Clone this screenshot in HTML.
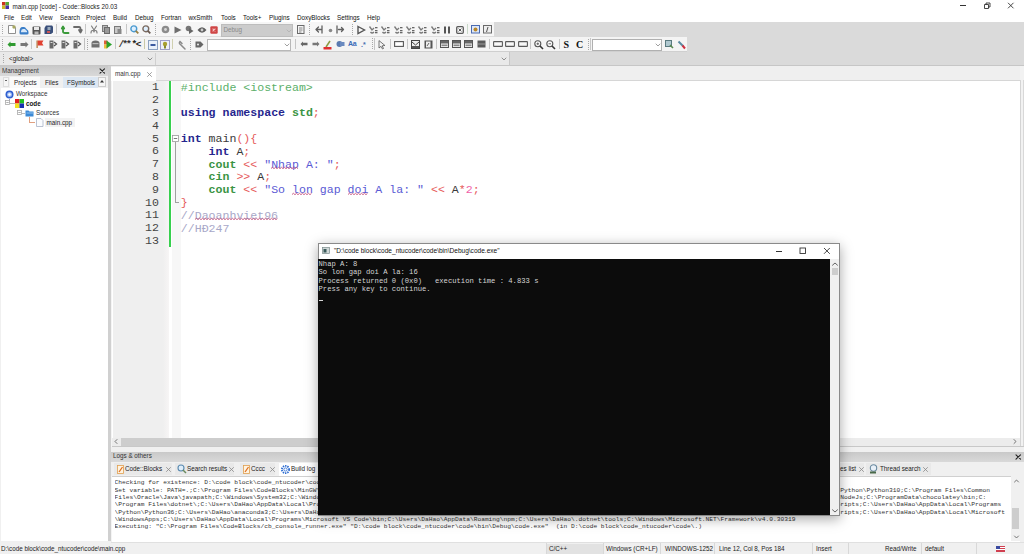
<!DOCTYPE html>
<html><head><meta charset="utf-8">
<style>
html,body{margin:0;padding:0}
body{width:1024px;height:554px;overflow:hidden;position:relative;background:#f0f0f0;font-family:"Liberation Sans",sans-serif;font-size:6.3px;color:#000}
.a{position:absolute}
.t{position:absolute;white-space:pre}
svg{overflow:visible}
</style></head><body>
<div class="a" style="left:0px;top:0px;width:1024px;height:22px;background:#fff;"></div>
<svg class="a" style="left:2px;top:2px;" width="7" height="7" viewBox="0 0 7 7"><rect x="0" y="0" width="3.5" height="3.5" fill="#cc3322"/><rect x="3.5" y="0" width="3.5" height="3.5" fill="#55aa33"/><rect x="0" y="3.5" width="3.5" height="3.5" fill="#c9b92a"/><rect x="3.5" y="3.5" width="3.5" height="3.5" fill="#4433aa"/></svg>
<div class="t" style="left:12.5px;top:1.7999999999999998px;height:10px;line-height:10px;font-family:'Liberation Sans';font-size:6.3px;color:#222;font-weight:400;">main.cpp [code] - Code::Blocks 20.03</div>
<div class="a" style="left:960px;top:5px;width:5.5px;height:0.9px;background:#333;"></div>
<svg class="a" style="left:982px;top:2px;" width="9" height="7" viewBox="0 0 9 7"><path d="M2.5 2.5h4v4h-4z M4 2.5V1h4v4H6.5" fill="none" stroke="#333" stroke-width="0.9"/></svg>
<svg class="a" style="left:1007px;top:2px;" width="8" height="7" viewBox="0 0 8 7"><path d="M1 0.8L6.5 6.3M6.5 0.8L1 6.3" stroke="#333" stroke-width="0.9"/></svg>
<div class="t" style="left:4px;top:12.5px;height:10px;line-height:10px;font-family:'Liberation Sans';font-size:6.3px;color:#111;font-weight:400;">File</div>
<div class="t" style="left:21px;top:12.5px;height:10px;line-height:10px;font-family:'Liberation Sans';font-size:6.3px;color:#111;font-weight:400;">Edit</div>
<div class="t" style="left:39px;top:12.5px;height:10px;line-height:10px;font-family:'Liberation Sans';font-size:6.3px;color:#111;font-weight:400;">View</div>
<div class="t" style="left:60px;top:12.5px;height:10px;line-height:10px;font-family:'Liberation Sans';font-size:6.3px;color:#111;font-weight:400;">Search</div>
<div class="t" style="left:86px;top:12.5px;height:10px;line-height:10px;font-family:'Liberation Sans';font-size:6.3px;color:#111;font-weight:400;">Project</div>
<div class="t" style="left:113px;top:12.5px;height:10px;line-height:10px;font-family:'Liberation Sans';font-size:6.3px;color:#111;font-weight:400;">Build</div>
<div class="t" style="left:135px;top:12.5px;height:10px;line-height:10px;font-family:'Liberation Sans';font-size:6.3px;color:#111;font-weight:400;">Debug</div>
<div class="t" style="left:161px;top:12.5px;height:10px;line-height:10px;font-family:'Liberation Sans';font-size:6.3px;color:#111;font-weight:400;">Fortran</div>
<div class="t" style="left:188.5px;top:12.5px;height:10px;line-height:10px;font-family:'Liberation Sans';font-size:6.3px;color:#111;font-weight:400;">wxSmith</div>
<div class="t" style="left:221px;top:12.5px;height:10px;line-height:10px;font-family:'Liberation Sans';font-size:6.3px;color:#111;font-weight:400;">Tools</div>
<div class="t" style="left:243px;top:12.5px;height:10px;line-height:10px;font-family:'Liberation Sans';font-size:6.3px;color:#111;font-weight:400;">Tools+</div>
<div class="t" style="left:269px;top:12.5px;height:10px;line-height:10px;font-family:'Liberation Sans';font-size:6.3px;color:#111;font-weight:400;">Plugins</div>
<div class="t" style="left:297px;top:12.5px;height:10px;line-height:10px;font-family:'Liberation Sans';font-size:6.3px;color:#111;font-weight:400;">DoxyBlocks</div>
<div class="t" style="left:337px;top:12.5px;height:10px;line-height:10px;font-family:'Liberation Sans';font-size:6.3px;color:#111;font-weight:400;">Settings</div>
<div class="t" style="left:367px;top:12.5px;height:10px;line-height:10px;font-family:'Liberation Sans';font-size:6.3px;color:#111;font-weight:400;">Help</div>
<div class="a" style="left:0px;top:22px;width:1024px;height:44px;background:#dadada;"></div>
<div class="a" style="left:0px;top:22px;width:494px;height:14px;background:#f6f6f6;"></div>
<div class="a" style="left:0px;top:36px;width:494px;height:0.6px;background:#dedede;"></div>
<div class="a" style="left:0px;top:37px;width:687px;height:13.5px;background:#f4f4f4;"></div>
<div class="a" style="left:0px;top:50.5px;width:687px;height:1px;background:#cfcfcf;"></div>
<div class="a" style="left:0px;top:52px;width:510px;height:13.5px;background:#e9e9e9;"></div>
<div class="a" style="left:0px;top:65.2px;width:1024px;height:0.9px;background:#c6c6c6;"></div>
<div class="a" style="left:0px;top:65.5px;width:510px;height:0.8px;background:#c8c8c8;"></div>
<svg class="a" style="left:2px;top:24.5px;" width="1" height="11" viewBox="0 0 1 11"><rect x="0" y="0" width="1" height="1" fill="#a8a8a8"/><rect x="0" y="2" width="1" height="1" fill="#a8a8a8"/><rect x="0" y="4" width="1" height="1" fill="#a8a8a8"/><rect x="0" y="6" width="1" height="1" fill="#a8a8a8"/><rect x="0" y="8" width="1" height="1" fill="#a8a8a8"/></svg>
<svg class="a" style="left:8px;top:25px;" width="8" height="9" viewBox="0 0 8 9"><path d="M0.5 0.5h5l2 2v6h-7z" fill="#fff" stroke="#909090" stroke-width="1"/></svg>
<svg class="a" style="left:12px;top:24.5px;" width="4" height="4" viewBox="0 0 4 4"><circle cx="2" cy="2" r="1.7" fill="#a8a860"/></svg>
<svg class="a" style="left:19px;top:25.5px;" width="10" height="9" viewBox="0 0 10 9"><path d="M0.5 6 Q0.5 1 3.5 1 L5 1 Q6.5 1 7 2.5 L8 3.5 Q9.5 4 9.5 6 L9.5 7.5 Q9.5 8.5 8 8.5 L2 8.5 Q0.5 8.5 0.5 7Z" fill="#3a7ec8"/><path d="M2 5.5 Q2 3 4 3 L6 3 Q7 4.5 8 5 L8 6.3 L2 6.3Z" fill="#d8e8f8"/></svg>
<svg class="a" style="left:32px;top:25.5px;" width="9" height="9" viewBox="0 0 9 9"><rect x="0.5" y="0.5" width="8" height="8" rx="1" fill="#555"/><rect x="2" y="1" width="5" height="3" fill="#e8e8e8"/><rect x="2.5" y="5.5" width="4" height="3" fill="#bbb"/></svg>
<svg class="a" style="left:43.5px;top:25px;" width="9" height="9" viewBox="0 0 9 9"><path d="M2 0.5h6l1 1v6l-2 1.5h-6.5v-6z" fill="#3a4f7a"/><rect x="3.5" y="2" width="3" height="3" fill="#9ab"/><rect x="3" y="6" width="3" height="2" fill="#c55"/></svg>
<div class="a" style="left:55.5px;top:24px;width:1px;height:10px;background:#c6c6c6;"></div>
<svg class="a" style="left:61px;top:25px;" width="9" height="9" viewBox="0 0 9 9"><path d="M2 4.5 L2 6.5 Q2 8 4 8 L7.5 8 M0.8 3.5 L2 1.5 L3.2 3.5" fill="none" stroke="#3a9a3a" stroke-width="1.8" stroke-linejoin="round" stroke-linecap="round"/></svg>
<svg class="a" style="left:73px;top:25px;" width="9" height="9" viewBox="0 0 9 9"><path d="M1 2 L6 2 Q7.5 2 7.5 4 L7.5 6 M6 5 L7.5 7.5 L8.8 5" fill="none" stroke="#6a6a6a" stroke-width="1.8" stroke-linejoin="round" stroke-linecap="round"/></svg>
<div class="a" style="left:85px;top:24px;width:1px;height:10px;background:#c6c6c6;"></div>
<svg class="a" style="left:90px;top:25px;" width="8" height="9" viewBox="0 0 8 9"><path d="M1.5 1 L4 5 L6.5 1 M1 8 Q1 5.5 2.5 5.5 Q4 5.5 4 7 M7 8 Q7 5.5 5.5 5.5 Q4 5.5 4 7" fill="none" stroke="#7a7a7a" stroke-width="1.1" stroke-linejoin="round" stroke-linecap="round"/></svg>
<svg class="a" style="left:102px;top:25px;" width="8" height="9" viewBox="0 0 8 9"><rect x="0.5" y="0.5" width="5" height="6" fill="#bbb" stroke="#7a7a7a"/><rect x="2.5" y="2.5" width="5" height="6" fill="#999" stroke="#6a6a6a"/></svg>
<svg class="a" style="left:114px;top:25px;" width="8" height="9" viewBox="0 0 8 9"><rect x="0.5" y="1.5" width="6" height="7" fill="#c8c8c8" stroke="#7a7a7a"/><rect x="3.5" y="4" width="4" height="5" fill="#888"/></svg>
<div class="a" style="left:125.5px;top:24px;width:1px;height:10px;background:#c6c6c6;"></div>
<svg class="a" style="left:130px;top:25px;" width="9" height="9" viewBox="0 0 9 9"><circle cx="3.8" cy="3.8" r="2.9" fill="#dff0ff" stroke="#4a9ad0" stroke-width="1.4"/><path d="M5.8 5.8L8.3 8.3" stroke="#9a8040" stroke-width="1.8"/></svg>
<svg class="a" style="left:142px;top:25px;" width="9" height="9" viewBox="0 0 9 9"><circle cx="3.8" cy="3.8" r="2.9" fill="#dff0ff" stroke="#7a6a60" stroke-width="1.4"/><path d="M5.8 5.8L8.3 8.3" stroke="#6a5a50" stroke-width="1.8"/></svg>
<svg class="a" style="left:155px;top:24px;" width="1" height="12" viewBox="0 0 1 12"><rect x="0" y="0" width="1" height="1" fill="#a8a8a8"/><rect x="0" y="2" width="1" height="1" fill="#a8a8a8"/><rect x="0" y="4" width="1" height="1" fill="#a8a8a8"/><rect x="0" y="6" width="1" height="1" fill="#a8a8a8"/><rect x="0" y="8" width="1" height="1" fill="#a8a8a8"/><rect x="0" y="10" width="1" height="1" fill="#a8a8a8"/></svg>
<svg class="a" style="left:160.5px;top:25px;" width="9" height="9" viewBox="0 0 9 9"><circle cx="4.5" cy="4.5" r="3.8" fill="#8c8c8c"/><circle cx="4.5" cy="4.5" r="1.4" fill="#d8d8d8"/></svg>
<svg class="a" style="left:173.5px;top:25.5px;" width="8" height="8" viewBox="0 0 8 8"><path d="M0.5 0.5 L7.5 4 L0.5 7.5 Z" fill="#6e6e6e"/></svg>
<svg class="a" style="left:185px;top:25px;" width="9" height="9" viewBox="0 0 9 9"><circle cx="3.5" cy="3.5" r="2.8" fill="#777"/><path d="M4 3 L8.5 6 L4 9Z" fill="#666"/></svg>
<svg class="a" style="left:196.5px;top:25.5px;" width="10" height="8" viewBox="0 0 10 8"><path d="M0.5 4 Q5 -1.5 9.5 4 Q5 9.5 0.5 4Z" fill="#5e5e5e"/><circle cx="5" cy="4" r="1.4" fill="#cfcfcf"/></svg>
<svg class="a" style="left:210px;top:25.5px;" width="8" height="8" viewBox="0 0 8 8"><rect x="0.3" y="0.3" width="7.4" height="7.4" rx="1.2" fill="#cf4545"/><path d="M2.6 2.6L5.4 5.4M5.4 2.6L2.6 5.4" stroke="#f4c8c8" stroke-width="1.1"/></svg>
<div class="a" style="left:221px;top:24px;width:72px;height:12.5px;background:#cccccc;border:0.5px solid #bdbdbd;box-sizing:border-box"></div>
<div class="t" style="left:223.5px;top:25.2px;height:10px;line-height:10px;font-family:'Liberation Sans';font-size:6.3px;color:#8a8a8a;font-weight:400;">Debug</div>
<svg class="a" style="left:286px;top:28.5px;" width="6" height="4" viewBox="0 0 6 4"><path d="M1 1 L3 3 L5 1" fill="none" stroke="#b0b0b0" stroke-width="0.8" stroke-linejoin="round" stroke-linecap="round"/></svg>
<svg class="a" style="left:297px;top:25px;" width="8" height="9" viewBox="0 0 8 9"><rect x="0.5" y="0.5" width="6.5" height="8" fill="#f4f4f4" stroke="#6a6a6a"/><path d="M2 3h3.5M2 5h3.5M2 7h2.5" stroke="#6a6a6a" stroke-width="0.8"/></svg>
<svg class="a" style="left:309px;top:24px;" width="1" height="12" viewBox="0 0 1 12"><rect x="0" y="0" width="1" height="1" fill="#a8a8a8"/><rect x="0" y="2" width="1" height="1" fill="#a8a8a8"/><rect x="0" y="4" width="1" height="1" fill="#a8a8a8"/><rect x="0" y="6" width="1" height="1" fill="#a8a8a8"/><rect x="0" y="8" width="1" height="1" fill="#a8a8a8"/><rect x="0" y="10" width="1" height="1" fill="#a8a8a8"/></svg>
<svg class="a" style="left:315px;top:25px;" width="8" height="9" viewBox="0 0 8 9"><path d="M7 1 L7 8 M1 4.5 L6 4.5 M3.5 2 L1 4.5 L3.5 7" fill="none" stroke="#606060" stroke-width="1.3" stroke-linejoin="round" stroke-linecap="round"/></svg>
<svg class="a" style="left:327.5px;top:27.5px;" width="5" height="5" viewBox="0 0 5 5"><circle cx="2.5" cy="2.5" r="1.8" fill="#888"/></svg>
<svg class="a" style="left:336px;top:25px;" width="9" height="9" viewBox="0 0 9 9"><path d="M1 1 L1 8 M2.5 4.5 L7.5 4.5 M5.5 2.5 L7.5 4.5 L5.5 6.5" fill="none" stroke="#606060" stroke-width="1.3" stroke-linejoin="round" stroke-linecap="round"/></svg>
<svg class="a" style="left:352px;top:24px;" width="1" height="12" viewBox="0 0 1 12"><rect x="0" y="0" width="1" height="1" fill="#a8a8a8"/><rect x="0" y="2" width="1" height="1" fill="#a8a8a8"/><rect x="0" y="4" width="1" height="1" fill="#a8a8a8"/><rect x="0" y="6" width="1" height="1" fill="#a8a8a8"/><rect x="0" y="8" width="1" height="1" fill="#a8a8a8"/><rect x="0" y="10" width="1" height="1" fill="#a8a8a8"/></svg>
<svg class="a" style="left:357px;top:25.5px;" width="8" height="8" viewBox="0 0 8 8"><path d="M1 0.5 L7.5 4 L1 7.5 Z" fill="none" stroke="#555" stroke-width="1.4"/></svg>
<svg class="a" style="left:369px;top:25px;" width="9" height="9" viewBox="0 0 9 9"><path d="M0.5 1.5 L3 5 L5 3 M1.5 7 Q3 9 5 7" fill="none" stroke="#7a7a7a" stroke-width="1.3"/><rect x="6" y="2" width="2.5" height="1.3" fill="#666"/><rect x="6" y="5" width="2.5" height="1.3" fill="#666"/><rect x="6" y="7" width="2.5" height="1.3" fill="#666"/></svg>
<svg class="a" style="left:381px;top:25px;" width="9" height="9" viewBox="0 0 9 9"><path d="M0.5 1.5 L3 5 L5 3 M1.5 7 Q3 9 5 7" fill="none" stroke="#7a7a7a" stroke-width="1.3"/><rect x="6" y="2" width="2.5" height="1.3" fill="#666"/><rect x="6" y="5" width="2.5" height="1.3" fill="#666"/><rect x="6" y="7" width="2.5" height="1.3" fill="#666"/></svg>
<svg class="a" style="left:394px;top:25px;" width="9" height="9" viewBox="0 0 9 9"><path d="M0.5 1.5 L3 5 L5 3 M1.5 7 Q3 9 5 7" fill="none" stroke="#7a7a7a" stroke-width="1.3"/><rect x="6" y="2" width="2.5" height="1.3" fill="#666"/><rect x="6" y="5" width="2.5" height="1.3" fill="#666"/><rect x="6" y="7" width="2.5" height="1.3" fill="#666"/></svg>
<svg class="a" style="left:406px;top:25px;" width="9" height="9" viewBox="0 0 9 9"><path d="M0.5 1.5 L3 5 L5 3 M1.5 7 Q3 9 5 7" fill="none" stroke="#7a7a7a" stroke-width="1.3"/><rect x="6" y="2" width="2.5" height="1.3" fill="#666"/><rect x="6" y="5" width="2.5" height="1.3" fill="#666"/><rect x="6" y="7" width="2.5" height="1.3" fill="#666"/></svg>
<svg class="a" style="left:418px;top:25px;" width="9" height="9" viewBox="0 0 9 9"><path d="M0.5 1.5 L3 5 L5 3 M1.5 7 Q3 9 5 7" fill="none" stroke="#7a7a7a" stroke-width="1.3"/><rect x="6" y="2" width="2.5" height="1.3" fill="#666"/><rect x="6" y="5" width="2.5" height="1.3" fill="#666"/><rect x="6" y="7" width="2.5" height="1.3" fill="#666"/></svg>
<svg class="a" style="left:431px;top:25px;" width="9" height="9" viewBox="0 0 9 9"><path d="M0.5 1.5 L3 5 L5 3 M1.5 7 Q3 9 5 7" fill="none" stroke="#7a7a7a" stroke-width="1.3"/><rect x="6" y="2" width="2.5" height="1.3" fill="#666"/><rect x="6" y="5" width="2.5" height="1.3" fill="#666"/><rect x="6" y="7" width="2.5" height="1.3" fill="#666"/></svg>
<svg class="a" style="left:443px;top:25.5px;" width="8" height="8" viewBox="0 0 8 8"><rect x="1" y="0.5" width="2" height="7" fill="#555"/><rect x="5" y="0.5" width="2" height="7" fill="#555"/></svg>
<svg class="a" style="left:455.5px;top:25.5px;" width="8" height="8" viewBox="0 0 8 8"><rect x="0.7" y="0.7" width="6.6" height="6.6" rx="1" fill="none" stroke="#5a5a5a" stroke-width="1.3"/><path d="M2.6 2.6L5.4 5.4M5.4 2.6L2.6 5.4" stroke="#5a5a5a" stroke-width="1"/></svg>
<div class="a" style="left:467px;top:24px;width:1px;height:10px;background:#c8d8c8;"></div>
<svg class="a" style="left:471px;top:25px;" width="9" height="9" viewBox="0 0 9 9"><rect x="0.5" y="0.5" width="8" height="7.5" fill="#dde8f8" stroke="#4a6ab0"/><circle cx="4.5" cy="4.5" r="2" fill="#b8862a"/></svg>
<svg class="a" style="left:483px;top:25px;" width="9" height="9" viewBox="0 0 9 9"><rect x="0.5" y="0.5" width="8" height="7.5" fill="#eee" stroke="#6a6a6a"/><path d="M5 2 L3.5 7" stroke="#444" stroke-width="0.9"/></svg>
<svg class="a" style="left:2px;top:38.5px;" width="1" height="12" viewBox="0 0 1 12"><rect x="0" y="0" width="1" height="1" fill="#a8a8a8"/><rect x="0" y="2" width="1" height="1" fill="#a8a8a8"/><rect x="0" y="4" width="1" height="1" fill="#a8a8a8"/><rect x="0" y="6" width="1" height="1" fill="#a8a8a8"/><rect x="0" y="8" width="1" height="1" fill="#a8a8a8"/><rect x="0" y="10" width="1" height="1" fill="#a8a8a8"/></svg>
<svg class="a" style="left:7px;top:40.5px;" width="9" height="7" viewBox="0 0 9 7"><path d="M0.5 3.5 L3.5 0.5 L3.5 2 L8.5 2 L8.5 5 L3.5 5 L3.5 6.5 Z" fill="#2f9a30"/></svg>
<svg class="a" style="left:20px;top:40.5px;" width="9" height="7" viewBox="0 0 9 7"><path d="M8.5 3.5 L5.5 0.5 L5.5 2 L0.5 2 L0.5 5 L5.5 5 L5.5 6.5 Z" fill="#777"/></svg>
<div class="a" style="left:31px;top:39px;width:1px;height:10px;background:#c6c6c6;"></div>
<svg class="a" style="left:36px;top:40px;" width="8" height="8" viewBox="0 0 8 8"><rect x="0.5" y="0.5" width="1.2" height="7.5" fill="#b07030"/><path d="M1.7 0.5 L7.5 0.5 L6 3 L7.5 5.5 L1.7 5.5Z" fill="#e04030"/></svg>
<svg class="a" style="left:49px;top:40px;" width="8" height="9" viewBox="0 0 8 9"><path d="M0.5 0.5h4v8h-4z" fill="#6a6a6a"/><path d="M5 2 L7.5 4 L5 6" fill="none" stroke="#555" stroke-width="1.3"/><rect x="1.5" y="2" width="2" height="1" fill="#ddd"/></svg>
<svg class="a" style="left:61px;top:40px;" width="8" height="9" viewBox="0 0 8 9"><path d="M0.5 0.5h4v8h-4z" fill="#6a6a6a"/><path d="M5 2 L7.5 4 L5 6" fill="none" stroke="#555" stroke-width="1.3"/><rect x="1.5" y="2" width="2" height="1" fill="#ddd"/></svg>
<svg class="a" style="left:73px;top:40px;" width="8" height="9" viewBox="0 0 8 9"><path d="M0.5 0.5h4v8h-4z" fill="#6a6a6a"/><path d="M5 2 L7.5 4 L5 6" fill="none" stroke="#555" stroke-width="1.3"/><rect x="1.5" y="2" width="2" height="1" fill="#ddd"/></svg>
<div class="a" style="left:84px;top:38px;width:1px;height:12px;background:#c0c0c0;"></div>
<svg class="a" style="left:87px;top:38.5px;" width="1" height="12" viewBox="0 0 1 12"><rect x="0" y="0" width="1" height="1" fill="#a8a8a8"/><rect x="0" y="2" width="1" height="1" fill="#a8a8a8"/><rect x="0" y="4" width="1" height="1" fill="#a8a8a8"/><rect x="0" y="6" width="1" height="1" fill="#a8a8a8"/><rect x="0" y="8" width="1" height="1" fill="#a8a8a8"/><rect x="0" y="10" width="1" height="1" fill="#a8a8a8"/></svg>
<svg class="a" style="left:91px;top:40px;" width="9" height="8" viewBox="0 0 9 8"><path d="M0.5 3 Q0.5 0.5 4.5 0.5 Q8.5 0.5 8.5 3 L8.5 7.5 L0.5 7.5Z" fill="#6f6f6f"/><rect x="1.5" y="3" width="6" height="1.2" fill="#bbb"/></svg>
<svg class="a" style="left:104px;top:39.5px;" width="8" height="9" viewBox="0 0 8 9"><rect x="0" y="0.5" width="3.5" height="4" fill="#e0603a"/><rect x="0" y="4.5" width="3.5" height="4" fill="#f0c040"/><path d="M2.5 0.5 L8 4.5 L2.5 8.5Z" fill="#2aa02a"/></svg>
<div class="a" style="left:115px;top:39px;width:1px;height:10px;background:#c6c6c6;"></div>
<div class="t" style="left:118.5px;top:39.8px;height:10px;line-height:10px;font-family:'Liberation Mono';font-size:9.5px;color:#333;font-weight:700;letter-spacing:-2px">/**</div>
<div class="t" style="left:131.5px;top:39.8px;height:10px;line-height:10px;font-family:'Liberation Mono';font-size:9.5px;color:#222;font-weight:700;letter-spacing:-1.5px">*&lt;</div>
<div class="a" style="left:144px;top:39px;width:1px;height:10px;background:#c8c8a8;"></div>
<svg class="a" style="left:148px;top:39.5px;" width="10" height="10" viewBox="0 0 10 10"><rect x="0.5" y="0.5" width="9" height="9" fill="#e8f0fa" stroke="#8aa0c0"/><rect x="2.5" y="4" width="5" height="2" fill="#3a5aa0"/></svg>
<svg class="a" style="left:160px;top:39.5px;" width="10" height="10" viewBox="0 0 10 10"><rect x="0.5" y="0.5" width="9" height="9" fill="#eef0f8" stroke="#a0a0c8"/><circle cx="5" cy="4" r="2.2" fill="#a8a030"/><rect x="4" y="5.5" width="2" height="3" fill="#8a8a30"/></svg>
<div class="a" style="left:172px;top:39px;width:1px;height:10px;background:#d0d0b0;"></div>
<svg class="a" style="left:178px;top:39.5px;" width="9" height="10" viewBox="0 0 9 10"><path d="M2 1.5 Q0.5 3.5 2.5 4.5 L7 9 M2 1.5 L4 3.5" fill="none" stroke="#8a8a8a" stroke-width="1.5" stroke-linejoin="round" stroke-linecap="round"/></svg>
<svg class="a" style="left:190px;top:38.5px;" width="1" height="12" viewBox="0 0 1 12"><rect x="0" y="0" width="1" height="1" fill="#a8a8a8"/><rect x="0" y="2" width="1" height="1" fill="#a8a8a8"/><rect x="0" y="4" width="1" height="1" fill="#a8a8a8"/><rect x="0" y="6" width="1" height="1" fill="#a8a8a8"/><rect x="0" y="8" width="1" height="1" fill="#a8a8a8"/><rect x="0" y="10" width="1" height="1" fill="#a8a8a8"/></svg>
<svg class="a" style="left:195px;top:40.5px;" width="9" height="7" viewBox="0 0 9 7"><path d="M0.5 0.5 L5.5 0.5 L8.5 3.5 L5.5 6.5 L0.5 6.5 Z" fill="#666"/><circle cx="3" cy="3.5" r="1" fill="#eee"/></svg>
<div class="a" style="left:207px;top:38.5px;width:84px;height:12px;background:#fff;border:0.6px solid #b8b8b8;box-sizing:border-box"></div>
<svg class="a" style="left:283.5px;top:43px;" width="6" height="4" viewBox="0 0 6 4"><path d="M1 1 L3 3 L5 1" fill="none" stroke="#888" stroke-width="0.8" stroke-linejoin="round" stroke-linecap="round"/></svg>
<div class="a" style="left:295px;top:39px;width:1px;height:10px;background:#c6c6c6;"></div>
<svg class="a" style="left:300px;top:41px;" width="8" height="6" viewBox="0 0 8 6"><path d="M0.5 3 L3 0.5 L3 1.8 L7.5 1.8 L7.5 4.2 L3 4.2 L3 5.5Z" fill="#666"/></svg>
<svg class="a" style="left:312px;top:41px;" width="8" height="6" viewBox="0 0 8 6"><path d="M7.5 3 L5 0.5 L5 1.8 L0.5 1.8 L0.5 4.2 L5 4.2 L5 5.5Z" fill="#777"/></svg>
<svg class="a" style="left:323px;top:39.5px;" width="9" height="10" viewBox="0 0 9 10"><path d="M3 7 L7 1" stroke="#8a9a40" stroke-width="1.5"/><rect x="0.5" y="7" width="8" height="2.5" fill="#e03030"/></svg>
<svg class="a" style="left:336px;top:40px;" width="9" height="8" viewBox="0 0 9 8"><circle cx="3.5" cy="4" r="3" fill="#5a7ab0"/><rect x="4" y="2" width="4.5" height="4" fill="#6a8ac0"/></svg>
<div class="t" style="left:348px;top:39.3px;height:10px;line-height:10px;font-family:'Liberation Sans';font-size:7px;color:#3a6ab8;font-weight:700;letter-spacing:-0.4px">Aa</div>
<div class="t" style="left:361px;top:39.8px;height:10px;line-height:10px;font-family:'Liberation Sans';font-size:7px;color:#4a70b0;font-weight:700;">.*</div>
<svg class="a" style="left:372px;top:38px;" width="1" height="12" viewBox="0 0 1 12"><rect x="0" y="0" width="1" height="1" fill="#a8a8a8"/><rect x="0" y="2" width="1" height="1" fill="#a8a8a8"/><rect x="0" y="4" width="1" height="1" fill="#a8a8a8"/><rect x="0" y="6" width="1" height="1" fill="#a8a8a8"/><rect x="0" y="8" width="1" height="1" fill="#a8a8a8"/><rect x="0" y="10" width="1" height="1" fill="#a8a8a8"/></svg>
<div class="a" style="left:374px;top:38px;width:1px;height:12px;background:#c4c4c4;"></div>
<svg class="a" style="left:378px;top:39.5px;" width="7" height="10" viewBox="0 0 7 10"><path d="M1 1 L1 8 L3 6.3 L4.5 9 L5.5 8.5 L4.2 5.8 L6.5 5.5 Z" fill="none" stroke="#555" stroke-width="0.8" stroke-linejoin="round" stroke-linecap="round"/></svg>
<div class="a" style="left:390px;top:39px;width:1px;height:10px;background:#c6c6c6;"></div>
<svg class="a" style="left:394px;top:41px;" width="10" height="6" viewBox="0 0 10 6"><rect x="0.6" y="0.6" width="8.8" height="4.8" fill="#fff" stroke="#555" stroke-width="1.1"/></svg>
<div class="a" style="left:407px;top:39px;width:1px;height:10px;background:#c6c6c6;"></div>
<svg class="a" style="left:411px;top:39.5px;" width="9" height="9" viewBox="0 0 9 9"><rect x="0.5" y="0.5" width="8" height="8" fill="#eee" stroke="#444"/><path d="M1 2 L4.5 5 L8 2" stroke="#444" fill="none"/><rect x="1" y="6" width="7" height="2" fill="#555"/></svg>
<svg class="a" style="left:424px;top:39.5px;" width="9" height="9" viewBox="0 0 9 9"><rect x="0.5" y="0.5" width="8" height="8" fill="#555"/><rect x="2" y="1.5" width="4.5" height="6" fill="#eee"/><path d="M3 6 L5 3" stroke="#666"/></svg>
<div class="a" style="left:436px;top:39px;width:1px;height:10px;background:#c6c6c6;"></div>
<svg class="a" style="left:440px;top:40px;" width="9" height="8" viewBox="0 0 9 8"><rect x="0.5" y="0.5" width="8" height="7" fill="#eee" stroke="#555"/><rect x="1" y="1" width="7" height="2.5" fill="#666"/><rect x="1.5" y="4.5" width="6" height="1.6" fill="#888"/></svg>
<svg class="a" style="left:452px;top:40px;" width="9" height="8" viewBox="0 0 9 8"><rect x="0.5" y="0.5" width="8" height="7" fill="#eee" stroke="#555"/><rect x="1" y="1" width="7" height="2.5" fill="#666"/><rect x="1.5" y="4.5" width="6" height="1.6" fill="#888"/></svg>
<svg class="a" style="left:464px;top:40px;" width="9" height="8" viewBox="0 0 9 8"><rect x="0.5" y="0.5" width="8" height="7" fill="#eee" stroke="#555"/><rect x="1" y="1" width="7" height="2.5" fill="#666"/><rect x="1.5" y="4.5" width="6" height="1.6" fill="#888"/></svg>
<svg class="a" style="left:477px;top:40px;" width="9" height="8" viewBox="0 0 9 8"><rect x="0.5" y="0.5" width="8" height="7" fill="#5a5a5a"/><rect x="1" y="3.5" width="7" height="1" fill="#999"/></svg>
<div class="a" style="left:489px;top:39px;width:1px;height:10px;background:#c6c6c6;"></div>
<svg class="a" style="left:493px;top:41px;" width="10" height="6" viewBox="0 0 10 6"><rect x="0.6" y="0.6" width="8.8" height="4.8" rx="0.5" fill="#f8f8f8" stroke="#5a5a5a" stroke-width="1.1"/></svg>
<svg class="a" style="left:505px;top:41px;" width="10" height="6" viewBox="0 0 10 6"><rect x="0.6" y="0.6" width="8.8" height="4.8" rx="0.5" fill="#f8f8f8" stroke="#5a5a5a" stroke-width="1.1"/></svg>
<svg class="a" style="left:518px;top:41px;" width="10" height="6" viewBox="0 0 10 6"><rect x="0.6" y="0.6" width="8.8" height="4.8" rx="0.5" fill="#f8f8f8" stroke="#5a5a5a" stroke-width="1.1"/></svg>
<div class="a" style="left:530px;top:39px;width:1px;height:10px;background:#c6c6c6;"></div>
<svg class="a" style="left:534px;top:39.5px;" width="10" height="10" viewBox="0 0 10 10"><circle cx="3.8" cy="3.8" r="3" fill="#fff" stroke="#555" stroke-width="1.1"/><path d="M2.5 3.8h2.6M3.8 2.5v2.6" stroke="#555" stroke-width="0.9"/><path d="M6 6 L9 9" stroke="#333" stroke-width="1.6"/></svg>
<svg class="a" style="left:546px;top:39.5px;" width="10" height="10" viewBox="0 0 10 10"><circle cx="3.8" cy="3.8" r="3" fill="#fff" stroke="#555" stroke-width="1.1"/><path d="M2.5 3.8h2.6" stroke="#555" stroke-width="0.9"/><path d="M6 6 L9 9" stroke="#333" stroke-width="1.6"/></svg>
<div class="a" style="left:559px;top:39px;width:1px;height:10px;background:#c6c6c6;"></div>
<div class="t" style="left:563.5px;top:39.5px;height:10px;line-height:10px;font-family:'Liberation Serif';font-size:10px;color:#111;font-weight:700;">S</div>
<div class="t" style="left:576px;top:39.5px;height:10px;line-height:10px;font-family:'Liberation Serif';font-size:10px;color:#111;font-weight:700;">C</div>
<svg class="a" style="left:588px;top:38.5px;" width="1" height="12" viewBox="0 0 1 12"><rect x="0" y="0" width="1" height="1" fill="#a8a8a8"/><rect x="0" y="2" width="1" height="1" fill="#a8a8a8"/><rect x="0" y="4" width="1" height="1" fill="#a8a8a8"/><rect x="0" y="6" width="1" height="1" fill="#a8a8a8"/><rect x="0" y="8" width="1" height="1" fill="#a8a8a8"/><rect x="0" y="10" width="1" height="1" fill="#a8a8a8"/></svg>
<div class="a" style="left:590px;top:38px;width:1px;height:12px;background:#c8c8c8;"></div>
<div class="a" style="left:592px;top:38.5px;width:70px;height:12px;background:#fff;border:0.6px solid #b0b0b0;box-sizing:border-box"></div>
<svg class="a" style="left:654.5px;top:43px;" width="6" height="4" viewBox="0 0 6 4"><path d="M1 1 L3 3 L5 1" fill="none" stroke="#888" stroke-width="0.8" stroke-linejoin="round" stroke-linecap="round"/></svg>
<svg class="a" style="left:665px;top:40px;" width="9" height="9" viewBox="0 0 9 9"><rect x="0.5" y="0.5" width="6" height="6" fill="#b0c8d0" stroke="#5a7a80"/><path d="M5 5 L8 8" stroke="#5a8a50" stroke-width="1.6"/></svg>
<svg class="a" style="left:677px;top:39.5px;" width="9" height="10" viewBox="0 0 9 10"><path d="M1.5 1.5 L6 6" stroke="#5a8aa0" stroke-width="2"/><path d="M5.5 5.5 L8 8.5" stroke="#d03040" stroke-width="2"/></svg>
<svg class="a" style="left:2.5px;top:53.5px;" width="1" height="11" viewBox="0 0 1 11"><rect x="0" y="0" width="1" height="1" fill="#a8a8a8"/><rect x="0" y="2" width="1" height="1" fill="#a8a8a8"/><rect x="0" y="4" width="1" height="1" fill="#a8a8a8"/><rect x="0" y="6" width="1" height="1" fill="#a8a8a8"/><rect x="0" y="8" width="1" height="1" fill="#a8a8a8"/></svg>
<div class="t" style="left:9px;top:53.7px;height:10px;line-height:10px;font-family:'Liberation Sans';font-size:6.3px;color:#222;font-weight:400;">&lt;global&gt;</div>
<svg class="a" style="left:147px;top:57px;" width="6" height="4" viewBox="0 0 6 4"><path d="M1 1 L3 3 L5 1" fill="none" stroke="#777" stroke-width="0.8" stroke-linejoin="round" stroke-linecap="round"/></svg>
<div class="a" style="left:154.5px;top:53px;width:1px;height:12px;background:#d0d0d0;"></div>
<svg class="a" style="left:501px;top:57px;" width="6" height="4" viewBox="0 0 6 4"><path d="M1 1 L3 3 L5 1" fill="none" stroke="#777" stroke-width="0.8" stroke-linejoin="round" stroke-linecap="round"/></svg>
<div class="a" style="left:508.5px;top:52px;width:1px;height:14px;background:#c8c8c8;"></div>
<div class="a" style="left:0px;top:66px;width:108px;height:10px;background:linear-gradient(#c9c9c9,#d9d9d9);"></div>
<div class="t" style="left:2px;top:65.8px;height:10px;line-height:10px;font-family:'Liberation Sans';font-size:6.3px;color:#3a3a3a;font-weight:400;">Management</div>
<svg class="a" style="left:99px;top:68px;" width="7" height="6" viewBox="0 0 7 6"><path d="M1 0.8 L5.5 5.2 M5.5 0.8 L1 5.2" fill="none" stroke="#222" stroke-width="1.1" stroke-linejoin="round" stroke-linecap="round"/></svg>
<div class="a" style="left:0px;top:76px;width:108px;height:12px;background:#f0f0f0;"></div>
<div class="a" style="left:2.5px;top:77px;width:6.5px;height:10px;background:#f6f6f6;border:0.5px solid #ddd;box-sizing:border-box"></div>
<div class="a" style="left:5px;top:79.5px;width:1.5px;height:1.5px;background:#666;"></div>
<div class="a" style="left:10px;top:76.5px;width:30px;height:12px;background:#fafafa;"></div>
<div class="t" style="left:14px;top:77.8px;height:10px;line-height:10px;font-family:'Liberation Sans';font-size:6.3px;color:#222;font-weight:400;">Projects</div>
<div class="t" style="left:45px;top:78.0px;height:10px;line-height:10px;font-family:'Liberation Sans';font-size:6.3px;color:#222;font-weight:400;">Files</div>
<div class="a" style="left:63px;top:77px;width:34.5px;height:11px;background:#dce7f3;"></div>
<div class="t" style="left:67px;top:78.0px;height:10px;line-height:10px;font-family:'Liberation Sans';font-size:6.3px;color:#222;font-weight:400;">FSymbols</div>
<div class="a" style="left:98px;top:77px;width:7.5px;height:10px;background:#f6f6f6;border:0.5px solid #ccc;box-sizing:border-box"></div>
<svg class="a" style="left:100px;top:80px;" width="4" height="3" viewBox="0 0 4 3"><path d="M0 2.5 L2 0 L4 2.5Z" fill="#333"/></svg>
<div class="a" style="left:1px;top:88px;width:106.5px;height:453px;background:#fff;"></div>
<svg class="a" style="left:4.5px;top:89.5px;" width="9" height="9" viewBox="0 0 9 9"><circle cx="4.5" cy="4.5" r="4" fill="#2f5fd0"/><circle cx="4.5" cy="4.5" r="2.5" fill="#9ab8f0"/><circle cx="4.5" cy="4.5" r="1.3" fill="#fff"/></svg>
<div class="t" style="left:16px;top:88.5px;height:10px;line-height:10px;font-family:'Liberation Sans';font-size:6.3px;color:#333;font-weight:400;">Workspace</div>
<div class="a" style="left:9px;top:98.5px;width:0.8px;height:4px;background:#a0a0c0;"></div>
<svg class="a" style="left:4.5px;top:100px;" width="5" height="5" viewBox="0 0 5 5"><rect x="0.5" y="0.5" width="4" height="4" fill="#fff" stroke="#aaa" stroke-width="0.8"/><path d="M1.3 2.5h2.4" stroke="#777" stroke-width="0.6"/></svg>
<div class="a" style="left:9.5px;top:102.5px;width:5px;height:0.6px;background:#bbb;"></div>
<svg class="a" style="left:14.5px;top:98.5px;" width="9" height="9" viewBox="0 0 9 9"><rect x="0" y="0" width="4.5" height="4.5" fill="#e02020"/><rect x="4.5" y="0" width="4.5" height="4.5" fill="#20c020"/><rect x="0" y="4.5" width="4.5" height="4.5" fill="#f0e020"/><rect x="4.5" y="4.5" width="4.5" height="4.5" fill="#1830b0"/></svg>
<div class="t" style="left:26px;top:98.5px;height:10px;line-height:10px;font-family:'Liberation Sans';font-size:6.3px;color:#111;font-weight:700;">code</div>
<svg class="a" style="left:17px;top:110px;" width="5" height="5" viewBox="0 0 5 5"><rect x="0.5" y="0.5" width="4" height="4" fill="#fff" stroke="#aaa" stroke-width="0.8"/><path d="M1.3 2.5h2.4" stroke="#777" stroke-width="0.6"/></svg>
<div class="a" style="left:22px;top:112.5px;width:3px;height:0.6px;background:#bbb;"></div>
<svg class="a" style="left:25px;top:108.5px;" width="9" height="8" viewBox="0 0 9 8"><path d="M0.5 1.5 L3.5 1.5 L4.5 2.5 L8.5 2.5 L8.5 7.5 L0.5 7.5Z" fill="#3d8ad6"/><rect x="1.5" y="3.5" width="7" height="1" fill="#8ec0ee"/></svg>
<div class="t" style="left:36px;top:108.2px;height:10px;line-height:10px;font-family:'Liberation Sans';font-size:6.3px;color:#333;font-weight:400;">Sources</div>
<div class="a" style="left:29px;top:116.5px;width:0.7px;height:5.5px;background:#e0a080;"></div>
<div class="a" style="left:29px;top:122px;width:5.5px;height:0.7px;background:#e0a080;"></div>
<svg class="a" style="left:36px;top:117.5px;" width="8" height="9" viewBox="0 0 8 9"><path d="M0.5 0.5h4.5l2 2v6h-6.5z" fill="#fafcff" stroke="#a8b4c8" stroke-width="0.8"/></svg>
<div class="a" style="left:45px;top:118px;width:30px;height:9px;background:#f2f2f2;"></div>
<div class="t" style="left:46.5px;top:117.5px;height:10px;line-height:10px;font-family:'Liberation Sans';font-size:6.3px;color:#222;font-weight:400;">main.cpp</div>
<div class="a" style="left:107.5px;top:66px;width:3px;height:475px;background:#d0d0d0;"></div>
<div class="a" style="left:110.5px;top:66px;width:1px;height:475px;background:#f4f4f4;"></div>
<div class="a" style="left:111px;top:66px;width:913px;height:14px;background:#efefef;"></div>
<div class="a" style="left:111px;top:67px;width:44.5px;height:13.5px;background:#fff;"></div>
<div class="t" style="left:115px;top:69.2px;height:10px;line-height:10px;font-family:'Liberation Sans';font-size:6.3px;color:#333;font-weight:400;">main.cpp</div>
<svg class="a" style="left:147px;top:71.5px;" width="5" height="5" viewBox="0 0 5 5"><path d="M0.5 0.5 L4.5 4.5 M4.5 0.5 L0.5 4.5" fill="none" stroke="#888" stroke-width="0.8" stroke-linejoin="round" stroke-linecap="round"/></svg>
<div class="a" style="left:1019.5px;top:66px;width:4.5px;height:382px;background:#f2f2f2;"></div>
<div class="a" style="left:1019.6px;top:80px;width:0.8px;height:367px;background:#d4d4d4;"></div>
<div class="a" style="left:1023px;top:80px;width:1px;height:367px;background:#d8d8d8;"></div>
<div class="a" style="left:112px;top:80.5px;width:908px;height:357px;background:#fff;"></div>
<div class="a" style="left:155.5px;top:80px;width:865px;height:0.8px;background:#d6d6d6;"></div>
<div class="a" style="left:113px;top:80.5px;width:50px;height:357px;background:#efefef;"></div>
<div class="a" style="left:163px;top:80.5px;width:6px;height:357px;background:linear-gradient(to right,#efefef,#f7f5f5);"></div>
<div class="a" style="left:171.5px;top:80.5px;width:9px;height:357px;background:#f7f7f7;"></div>
<div class="a" style="left:168.9px;top:81px;width:2.6px;height:166px;background:#37d04e;"></div>
<div class="t" style="left:120px;width:39px;text-align:right;top:80.39px;height:13px;line-height:13px;font-family:'Liberation Mono';font-size:11.58px;color:#444">1</div>
<div class="t" style="left:120px;width:39px;text-align:right;top:93.19px;height:13px;line-height:13px;font-family:'Liberation Mono';font-size:11.58px;color:#444">2</div>
<div class="t" style="left:120px;width:39px;text-align:right;top:105.97px;height:13px;line-height:13px;font-family:'Liberation Mono';font-size:11.58px;color:#444">3</div>
<div class="t" style="left:120px;width:39px;text-align:right;top:118.77px;height:13px;line-height:13px;font-family:'Liberation Mono';font-size:11.58px;color:#444">4</div>
<div class="t" style="left:120px;width:39px;text-align:right;top:131.56px;height:13px;line-height:13px;font-family:'Liberation Mono';font-size:11.58px;color:#444">5</div>
<div class="t" style="left:120px;width:39px;text-align:right;top:144.34px;height:13px;line-height:13px;font-family:'Liberation Mono';font-size:11.58px;color:#444">6</div>
<div class="t" style="left:120px;width:39px;text-align:right;top:157.13px;height:13px;line-height:13px;font-family:'Liberation Mono';font-size:11.58px;color:#444">7</div>
<div class="t" style="left:120px;width:39px;text-align:right;top:169.93px;height:13px;line-height:13px;font-family:'Liberation Mono';font-size:11.58px;color:#444">8</div>
<div class="t" style="left:120px;width:39px;text-align:right;top:182.71px;height:13px;line-height:13px;font-family:'Liberation Mono';font-size:11.58px;color:#444">9</div>
<div class="t" style="left:120px;width:39px;text-align:right;top:195.50px;height:13px;line-height:13px;font-family:'Liberation Mono';font-size:11.58px;color:#444">10</div>
<div class="t" style="left:120px;width:39px;text-align:right;top:208.29px;height:13px;line-height:13px;font-family:'Liberation Mono';font-size:11.58px;color:#444">11</div>
<div class="t" style="left:120px;width:39px;text-align:right;top:221.08px;height:13px;line-height:13px;font-family:'Liberation Mono';font-size:11.58px;color:#444">12</div>
<div class="t" style="left:120px;width:39px;text-align:right;top:233.88px;height:13px;line-height:13px;font-family:'Liberation Mono';font-size:11.58px;color:#444">13</div>
<div class="t" style="left:180.8px;top:80.89px;height:13px;line-height:13px;font-family:'Liberation Mono';font-size:11.58px;color:#000"><span style="color:#5cb06a">#include &lt;iostream&gt;</span></div>
<div class="t" style="left:180.8px;top:106.47px;height:13px;line-height:13px;font-family:'Liberation Mono';font-size:11.58px;color:#000"><span style="color:#26268e;font-weight:700">using</span> <span style="color:#26268e;font-weight:700">namespace</span> <span style="color:#3a9444;font-weight:700">std</span><span style="color:#e65a5a">;</span></div>
<div class="t" style="left:180.8px;top:132.06px;height:13px;line-height:13px;font-family:'Liberation Mono';font-size:11.58px;color:#000"><span style="color:#26268e;font-weight:700">int</span> <span style="color:#3a3a3a">main</span><span style="color:#e65a5a">(){</span></div>
<div class="t" style="left:180.8px;top:144.84px;height:13px;line-height:13px;font-family:'Liberation Mono';font-size:11.58px;color:#000">    <span style="color:#26268e;font-weight:700">int</span> <span style="color:#3a3a3a">A</span><span style="color:#e65a5a">;</span></div>
<div class="t" style="left:180.8px;top:157.63px;height:13px;line-height:13px;font-family:'Liberation Mono';font-size:11.58px;color:#000">    <span style="color:#3a9444;font-weight:700">cout</span> <span style="color:#e65a5a">&lt;&lt;</span> <span style="color:#5a5ad4">&quot;Nhap A: &quot;</span><span style="color:#e65a5a">;</span></div>
<div class="t" style="left:180.8px;top:170.43px;height:13px;line-height:13px;font-family:'Liberation Mono';font-size:11.58px;color:#000">    <span style="color:#3a9444;font-weight:700">cin</span> <span style="color:#e65a5a">&gt;&gt;</span> <span style="color:#3a3a3a">A</span><span style="color:#e65a5a">;</span></div>
<div class="t" style="left:180.8px;top:183.21px;height:13px;line-height:13px;font-family:'Liberation Mono';font-size:11.58px;color:#000">    <span style="color:#3a9444;font-weight:700">cout</span> <span style="color:#e65a5a">&lt;&lt;</span> <span style="color:#5a5ad4">&quot;So lon gap doi A la: &quot;</span> <span style="color:#e65a5a">&lt;&lt;</span> <span style="color:#3a3a3a">A</span><span style="color:#e65a5a">*</span><span style="color:#f060a8">2</span><span style="color:#e65a5a">;</span></div>
<div class="t" style="left:180.8px;top:196.00px;height:13px;line-height:13px;font-family:'Liberation Mono';font-size:11.58px;color:#000"><span style="color:#e65a5a">}</span></div>
<div class="t" style="left:180.8px;top:208.79px;height:13px;line-height:13px;font-family:'Liberation Mono';font-size:11.58px;color:#000"><span style="color:#a8a8c8">//Daoanhviet96</span></div>
<div class="t" style="left:180.8px;top:221.58px;height:13px;line-height:13px;font-family:'Liberation Mono';font-size:11.58px;color:#000"><span style="color:#a8a8c8">//HĐ247</span></div>
<svg class="a" style="left:172px;top:134.555px;" width="7" height="7" viewBox="0 0 7 7"><rect x="0.5" y="0.5" width="6" height="6" fill="#fff" stroke="#999" stroke-width="0.8"/><path d="M1.8 3.5h3.4" stroke="#555" stroke-width="0.8"/></svg>
<div class="a" style="left:175.2px;top:141.555px;width:0.8px;height:60.44999999999999px;background:#a0a0a0;"></div>
<div class="a" style="left:175.2px;top:202.005px;width:3.5px;height:0.8px;background:#a0a0a0;"></div>
<svg class="a" style="left:271.15000000000003px;top:167.035px;" width="27.8" height="2.5" viewBox="0 0 27.8 2.5"><path d="M0 1.5 L1.50 0.3 L3.00 1.7 L4.50 0.3 L6.00 1.7 L7.50 0.3 L9.00 1.7 L10.50 0.3 L12.00 1.7 L13.50 0.3 L15.00 1.7 L16.50 0.3 L18.00 1.7 L19.50 0.3 L21.00 1.7 L22.50 0.3 L24.00 1.7 L25.50 0.3 L27.00 1.7" fill="none" stroke="#c4507a" stroke-width="0.9"/></svg>
<svg class="a" style="left:292.0px;top:192.61499999999998px;" width="20.85" height="2.5" viewBox="0 0 20.85 2.5"><path d="M0 1.5 L1.50 0.3 L3.00 1.7 L4.50 0.3 L6.00 1.7 L7.50 0.3 L9.00 1.7 L10.50 0.3 L12.00 1.7 L13.50 0.3 L15.00 1.7 L16.50 0.3 L18.00 1.7 L19.50 0.3" fill="none" stroke="#c4507a" stroke-width="0.9"/></svg>
<svg class="a" style="left:347.6px;top:192.61499999999998px;" width="20.85" height="2.5" viewBox="0 0 20.85 2.5"><path d="M0 1.5 L1.50 0.3 L3.00 1.7 L4.50 0.3 L6.00 1.7 L7.50 0.3 L9.00 1.7 L10.50 0.3 L12.00 1.7 L13.50 0.3 L15.00 1.7 L16.50 0.3 L18.00 1.7 L19.50 0.3" fill="none" stroke="#c4507a" stroke-width="0.9"/></svg>
<svg class="a" style="left:194.70000000000002px;top:218.195px;" width="83.4" height="2.5" viewBox="0 0 83.4 2.5"><path d="M0 1.5 L1.50 0.3 L3.00 1.7 L4.50 0.3 L6.00 1.7 L7.50 0.3 L9.00 1.7 L10.50 0.3 L12.00 1.7 L13.50 0.3 L15.00 1.7 L16.50 0.3 L18.00 1.7 L19.50 0.3 L21.00 1.7 L22.50 0.3 L24.00 1.7 L25.50 0.3 L27.00 1.7 L28.50 0.3 L30.00 1.7 L31.50 0.3 L33.00 1.7 L34.50 0.3 L36.00 1.7 L37.50 0.3 L39.00 1.7 L40.50 0.3 L42.00 1.7 L43.50 0.3 L45.00 1.7 L46.50 0.3 L48.00 1.7 L49.50 0.3 L51.00 1.7 L52.50 0.3 L54.00 1.7 L55.50 0.3 L57.00 1.7 L58.50 0.3 L60.00 1.7 L61.50 0.3 L63.00 1.7 L64.50 0.3 L66.00 1.7 L67.50 0.3 L69.00 1.7 L70.50 0.3 L72.00 1.7 L73.50 0.3 L75.00 1.7 L76.50 0.3 L78.00 1.7 L79.50 0.3 L81.00 1.7 L82.50 0.3" fill="none" stroke="#c4507a" stroke-width="0.9"/></svg>
<div class="a" style="left:112px;top:437.5px;width:908px;height:8.5px;background:#ececec;"></div>
<svg class="a" style="left:113.5px;top:439.2px;" width="4" height="5" viewBox="0 0 4 5"><path d="M3 0.5 L1 2.5 L3 4.5" fill="none" stroke="#555" stroke-width="0.8" stroke-linejoin="round" stroke-linecap="round"/></svg>
<svg class="a" style="left:1013px;top:439.2px;" width="4" height="5" viewBox="0 0 4 5"><path d="M1 0.5 L3 2.5 L1 4.5" fill="none" stroke="#555" stroke-width="0.8" stroke-linejoin="round" stroke-linecap="round"/></svg>
<div class="a" style="left:121px;top:438px;width:680px;height:7.5px;background:#cdcdcd;"></div>
<div class="a" style="left:112px;top:445.5px;width:912px;height:1px;background:#c8c8c8;"></div>
<div class="a" style="left:111px;top:446.5px;width:913px;height:5px;background:#f0f0f0;"></div>
<div class="a" style="left:111px;top:451.5px;width:913px;height:10px;background:linear-gradient(#c9c9c9,#d9d9d9);"></div>
<div class="t" style="left:113px;top:451.3px;height:10px;line-height:10px;font-family:'Liberation Sans';font-size:6.3px;color:#333;font-weight:400;">Logs &amp; others</div>
<svg class="a" style="left:1015px;top:454px;" width="7" height="6" viewBox="0 0 7 6"><path d="M1 0.8 L5.5 5.2 M5.5 0.8 L1 5.2" fill="none" stroke="#222" stroke-width="1.1" stroke-linejoin="round" stroke-linecap="round"/></svg>
<div class="a" style="left:111px;top:461.5px;width:913px;height:14px;background:#f0f0f0;"></div>
<div class="a" style="left:114px;top:463px;width:58px;height:12px;background:#e9e9e9;"></div>
<svg class="a" style="left:117px;top:464.5px" width="7" height="9"><rect x="0.5" y="0.5" width="6" height="8" fill="#fff3e0" stroke="#e0a050" stroke-width="0.8"/><path d="M2 7 L5.5 2" stroke="#e07020" stroke-width="1.3"/></svg>
<div class="t" style="left:125px;top:464.0px;height:10px;line-height:10px;font-family:'Liberation Sans';font-size:6.3px;color:#1a1a1a;font-weight:400;">Code::Blocks</div>
<svg class="a" style="left:165.5px;top:466.5px;" width="5" height="5" viewBox="0 0 5 5"><path d="M0.5 0.5 L4.5 4.5 M4.5 0.5 L0.5 4.5" fill="none" stroke="#888" stroke-width="0.8" stroke-linejoin="round" stroke-linecap="round"/></svg>
<div class="a" style="left:175px;top:463px;width:59px;height:12px;background:#e9e9e9;"></div>
<svg class="a" style="left:177px;top:464px" width="10" height="10"><circle cx="4" cy="4" r="3" fill="#dfeefa" stroke="#5a8ab0" stroke-width="1.1"/><path d="M6 6 L9 9" stroke="#6a8a60" stroke-width="1.5"/></svg>
<div class="t" style="left:187px;top:464.0px;height:10px;line-height:10px;font-family:'Liberation Sans';font-size:6.3px;color:#1a1a1a;font-weight:400;">Search results</div>
<svg class="a" style="left:228.5px;top:466.5px;" width="5" height="5" viewBox="0 0 5 5"><path d="M0.5 0.5 L4.5 4.5 M4.5 0.5 L0.5 4.5" fill="none" stroke="#888" stroke-width="0.8" stroke-linejoin="round" stroke-linecap="round"/></svg>
<div class="a" style="left:240px;top:463px;width:35px;height:12px;background:#e9e9e9;"></div>
<svg class="a" style="left:243px;top:464.5px" width="7" height="9"><rect x="0.5" y="0.5" width="6" height="8" fill="#fff3e0" stroke="#e0a050" stroke-width="0.8"/><path d="M2 7 L5.5 2" stroke="#e07020" stroke-width="1.3"/></svg>
<div class="t" style="left:251px;top:464.0px;height:10px;line-height:10px;font-family:'Liberation Sans';font-size:6.3px;color:#1a1a1a;font-weight:400;">Cccc</div>
<svg class="a" style="left:269.5px;top:466.5px;" width="5" height="5" viewBox="0 0 5 5"><path d="M0.5 0.5 L4.5 4.5 M4.5 0.5 L0.5 4.5" fill="none" stroke="#888" stroke-width="0.8" stroke-linejoin="round" stroke-linecap="round"/></svg>
<div class="a" style="left:279px;top:462.5px;width:39px;height:13px;background:#fff;"></div>
<svg class="a" style="left:281px;top:464.5px" width="9" height="9"><circle cx="4.5" cy="4.5" r="3.6" fill="none" stroke="#2a6ad0" stroke-width="1.8" stroke-dasharray="1.4 0.9"/><circle cx="4.5" cy="4.5" r="1.6" fill="#fff" stroke="#2a6ad0" stroke-width="0.8"/></svg>
<div class="t" style="left:291px;top:464.0px;height:10px;line-height:10px;font-family:'Liberation Sans';font-size:6.3px;color:#1a1a1a;font-weight:400;">Build log</div>
<div class="a" style="left:838px;top:463px;width:26px;height:12px;background:#e9e9e9;"></div>

<div class="t" style="left:840px;top:464.0px;height:10px;line-height:10px;font-family:'Liberation Sans';font-size:6.3px;color:#1a1a1a;font-weight:400;">es list</div>
<svg class="a" style="left:858.5px;top:466.5px;" width="5" height="5" viewBox="0 0 5 5"><path d="M0.5 0.5 L4.5 4.5 M4.5 0.5 L0.5 4.5" fill="none" stroke="#888" stroke-width="0.8" stroke-linejoin="round" stroke-linecap="round"/></svg>
<div class="a" style="left:866px;top:463px;width:65px;height:12px;background:#e9e9e9;"></div>
<svg class="a" style="left:868.5px;top:464px" width="10" height="10"><circle cx="4.5" cy="4" r="3.2" fill="#e8f0f8" stroke="#6a8aa0" stroke-width="1.1"/><rect x="1" y="7.5" width="6" height="2" fill="#4a6a4a"/></svg>
<div class="t" style="left:880px;top:464.0px;height:10px;line-height:10px;font-family:'Liberation Sans';font-size:6.3px;color:#1a1a1a;font-weight:400;">Thread search</div>
<svg class="a" style="left:922.5px;top:466.5px;" width="5" height="5" viewBox="0 0 5 5"><path d="M0.5 0.5 L4.5 4.5 M4.5 0.5 L0.5 4.5" fill="none" stroke="#888" stroke-width="0.8" stroke-linejoin="round" stroke-linecap="round"/></svg>
<div class="a" style="left:112px;top:475.5px;width:908px;height:66px;background:#fff;"></div>
<div class="a" style="left:112px;top:475.5px;width:908px;height:0.7px;background:#d0d0d0;"></div>
<div class="a" style="left:1011px;top:476px;width:9px;height:65px;background:#f0f0f0;"></div>
<svg class="a" style="left:1013.5px;top:479px;" width="5" height="4" viewBox="0 0 5 4"><path d="M0.5 3 L2.5 1 L4.5 3" fill="none" stroke="#555" stroke-width="0.8" stroke-linejoin="round" stroke-linecap="round"/></svg>
<svg class="a" style="left:1013.5px;top:535px;" width="5" height="4" viewBox="0 0 5 4"><path d="M0.5 1 L2.5 3 L4.5 1" fill="none" stroke="#555" stroke-width="0.8" stroke-linejoin="round" stroke-linecap="round"/></svg>
<div class="a" style="left:1012px;top:508px;width:7px;height:21px;background:#cdcdcd;"></div>
<div class="t" style="left:114.5px;top:479.30px;height:8px;line-height:8px;font-family:'Liberation Mono';font-size:6.24px;color:#333;width:895px;overflow:hidden">Checking for existence: D:\code block\code_ntucoder\code\bin\Debug\code.exe</div>
<div class="t" style="left:114.5px;top:486.65px;height:8px;line-height:8px;font-family:'Liberation Mono';font-size:6.24px;color:#333;width:895px;overflow:hidden">Set variable: PATH=.;C:\Program Files\CodeBlocks\MinGW\bin;C:\Program Files\CodeBlocks\MinGW;C:\Users\DaHao\AppData\Local\Programs\Python\Python310\Scripts;C:\Program Files\CodeBlocks\MinGW\bin;Python\Python310;C:\Program Files\Common</div>
<div class="t" style="left:114.5px;top:494.00px;height:8px;line-height:8px;font-family:'Liberation Mono';font-size:6.24px;color:#333;width:895px;overflow:hidden">Files\Oracle\Java\javapath;C:\Windows\System32;C:\Windows;C:\Windows\System32\wbem;C:\Users\DaHao\AppData\Local\Programs\Python\Python310\Scripts;C:\Program Files\CodeBlocks\MinGW\bin;C:\WindowsNodeJs;C:\ProgramData\chocolatey\bin;C:</div>
<div class="t" style="left:114.5px;top:501.35px;height:8px;line-height:8px;font-family:'Liberation Mono';font-size:6.24px;color:#333;width:895px;overflow:hidden">\Program Files\dotnet\;C:\Users\DaHao\AppData\Local\Programs\Python\Python310\Sc;C:\Users\DaHao\AppData\Local\Programs\Python\Python310\Scripts;C:\Program Files\CodeBlocks\MinGW\bin;C:\Windows\Sripts;C:\Users\DaHao\AppData\Local\Programs</div>
<div class="t" style="left:114.5px;top:508.70px;height:8px;line-height:8px;font-family:'Liberation Mono';font-size:6.24px;color:#333;width:895px;overflow:hidden">\Python\Python36;C:\Users\DaHao\anaconda3;C:\Users\DaHao\anaconda3\Library\bin;C:\Users\DaHao\AppData\Local\Programs\Python\Python310\Scripts;C:\Program Files\CodeBlocks\MinGW\bin;C:\Windows\Sysripts;C:\Users\DaHao\AppData\Local\Microsoft</div>
<div class="t" style="left:114.5px;top:516.05px;height:8px;line-height:8px;font-family:'Liberation Mono';font-size:6.24px;color:#333;width:895px;overflow:hidden">\WindowsApps;C:\Users\DaHao\AppData\Local\Programs\Microsoft VS Code\bin;C:\Users\DaHao\AppData\Roaming\npm;C:\Users\DaHao\.dotnet\tools;C:\Windows\Microsoft.NET\Framework\v4.0.30319</div>
<div class="t" style="left:114.5px;top:523.40px;height:8px;line-height:8px;font-family:'Liberation Mono';font-size:6.24px;color:#333;width:895px;overflow:hidden">Executing: &quot;C:\Program Files\CodeBlocks/cb_console_runner.exe&quot; &quot;D:\code block\code_ntucoder\code\bin\Debug\code.exe&quot;  (in D:\code block\code_ntucoder\code\.)</div>
<div class="a" style="left:111px;top:541.5px;width:913px;height:1px;background:#e0e0e0;"></div>
<div class="t" style="left:1px;top:544.0px;height:10px;line-height:10px;font-family:'Liberation Sans';font-size:6.3px;color:#222;font-weight:400;">D:\code block\code_ntucoder\code\main.cpp</div>
<div class="a" style="left:546px;top:543px;width:0.8px;height:11px;background:#d8d8d8;"></div>
<div class="a" style="left:603px;top:543px;width:0.8px;height:11px;background:#d8d8d8;"></div>
<div class="a" style="left:660px;top:543px;width:0.8px;height:11px;background:#d8d8d8;"></div>
<div class="a" style="left:714px;top:543px;width:0.8px;height:11px;background:#d8d8d8;"></div>
<div class="a" style="left:812px;top:543px;width:0.8px;height:11px;background:#d8d8d8;"></div>
<div class="a" style="left:848px;top:543px;width:0.8px;height:11px;background:#d8d8d8;"></div>
<div class="a" style="left:921px;top:543px;width:0.8px;height:11px;background:#d8d8d8;"></div>
<div class="a" style="left:976px;top:543px;width:0.8px;height:11px;background:#d8d8d8;"></div>
<div class="a" style="left:547px;top:543.5px;width:56px;height:10.5px;background:#e2e2e2;"></div>
<div class="t" style="left:549px;top:544.0px;height:10px;line-height:10px;font-family:'Liberation Sans';font-size:6.3px;color:#222;font-weight:400;">C/C++</div>
<div class="t" style="left:606px;top:544.0px;height:10px;line-height:10px;font-family:'Liberation Sans';font-size:6.3px;color:#222;font-weight:400;">Windows (CR+LF)</div>
<div class="t" style="left:665px;top:544.0px;height:10px;line-height:10px;font-family:'Liberation Sans';font-size:6.3px;color:#222;font-weight:400;">WINDOWS-1252</div>
<div class="t" style="left:719px;top:544.0px;height:10px;line-height:10px;font-family:'Liberation Sans';font-size:6.3px;color:#222;font-weight:400;">Line 12, Col 8, Pos 184</div>
<div class="t" style="left:816px;top:544.0px;height:10px;line-height:10px;font-family:'Liberation Sans';font-size:6.3px;color:#222;font-weight:400;">Insert</div>
<div class="t" style="left:885px;top:544.0px;height:10px;line-height:10px;font-family:'Liberation Sans';font-size:6.3px;color:#222;font-weight:400;">Read/Write</div>
<div class="t" style="left:925px;top:544.0px;height:10px;line-height:10px;font-family:'Liberation Sans';font-size:6.3px;color:#222;font-weight:400;">default</div>
<svg class="a" style="left:996px;top:546px;" width="9" height="6" viewBox="0 0 9 6"><rect x="0" y="0" width="9" height="6" fill="#d04050"/><rect x="0" y="1" width="9" height="1" fill="#fff"/><rect x="0" y="3" width="9" height="1" fill="#fff"/><rect x="0" y="0" width="4" height="3" fill="#3a4aa0"/></svg>
<div class="a" style="left:317.5px;top:242.5px;width:522px;height:273px;box-shadow:0 3px 12px rgba(0,0,0,0.35)"></div>
<div class="a" style="left:317.5px;top:242.5px;width:522px;height:273px;background:#fff;border:0.8px solid #8a8a8a;box-sizing:border-box"></div>
<svg class="a" style="left:322px;top:246.5px;" width="8" height="7" viewBox="0 0 8 7"><rect x="0.5" y="0.5" width="7" height="6" fill="#d0d8d8" stroke="#7a8a8a" stroke-width="0.7"/><rect x="1.5" y="2" width="3" height="3.5" fill="#3a5a5a"/></svg>
<div class="t" style="left:334px;top:246.0px;height:10px;line-height:10px;font-family:'Liberation Sans';font-size:6.55px;color:#111;font-weight:400;">&quot;D:\code block\code_ntucoder\code\bin\Debug\code.exe&quot;</div>
<div class="a" style="left:776px;top:250.6px;width:6px;height:0.9px;background:#333;"></div>
<svg class="a" style="left:799px;top:247px;" width="8" height="8" viewBox="0 0 8 8"><rect x="1" y="1" width="5.5" height="5.5" fill="none" stroke="#333" stroke-width="0.9"/></svg>
<svg class="a" style="left:823px;top:247px;" width="8" height="8" viewBox="0 0 8 8"><path d="M1 1 L6.8 6.8 M6.8 1 L1 6.8" stroke="#333" stroke-width="0.9"/></svg>
<div class="a" style="left:318px;top:259px;width:512px;height:256px;background:#0c0c0c;"></div>
<div class="a" style="left:830px;top:259px;width:9px;height:256px;background:#f0f0f0;"></div>
<svg class="a" style="left:832px;top:262px;" width="6" height="4" viewBox="0 0 6 4"><path d="M0.5 3.2 L3 1 L5.5 3.2" fill="none" stroke="#555" stroke-width="0.9" stroke-linejoin="round" stroke-linecap="round"/></svg>
<div class="a" style="left:831.5px;top:268px;width:6px;height:7px;background:#cdcdcd;"></div>
<svg class="a" style="left:832px;top:508.5px;" width="6" height="4" viewBox="0 0 6 4"><path d="M0.5 0.8 L3 3 L5.5 0.8" fill="none" stroke="#555" stroke-width="0.9" stroke-linejoin="round" stroke-linecap="round"/></svg>
<div class="t" style="left:318.5px;top:259.60px;height:9px;line-height:9px;font-family:'Liberation Mono';font-size:7.2px;color:#d4d4d4">Nhap A: 8</div>
<div class="t" style="left:318.5px;top:268.20px;height:9px;line-height:9px;font-family:'Liberation Mono';font-size:7.2px;color:#d4d4d4">So lon gap doi A la: 16</div>
<div class="t" style="left:318.5px;top:276.80px;height:9px;line-height:9px;font-family:'Liberation Mono';font-size:7.2px;color:#d4d4d4">Process returned 0 (0x0)   execution time : 4.833 s</div>
<div class="t" style="left:318.5px;top:285.40px;height:9px;line-height:9px;font-family:'Liberation Mono';font-size:7.2px;color:#d4d4d4">Press any key to continue.</div>
<div class="a" style="left:319px;top:299.8px;width:3.8px;height:1.6px;background:#d8d8d8;"></div>
</body></html>
